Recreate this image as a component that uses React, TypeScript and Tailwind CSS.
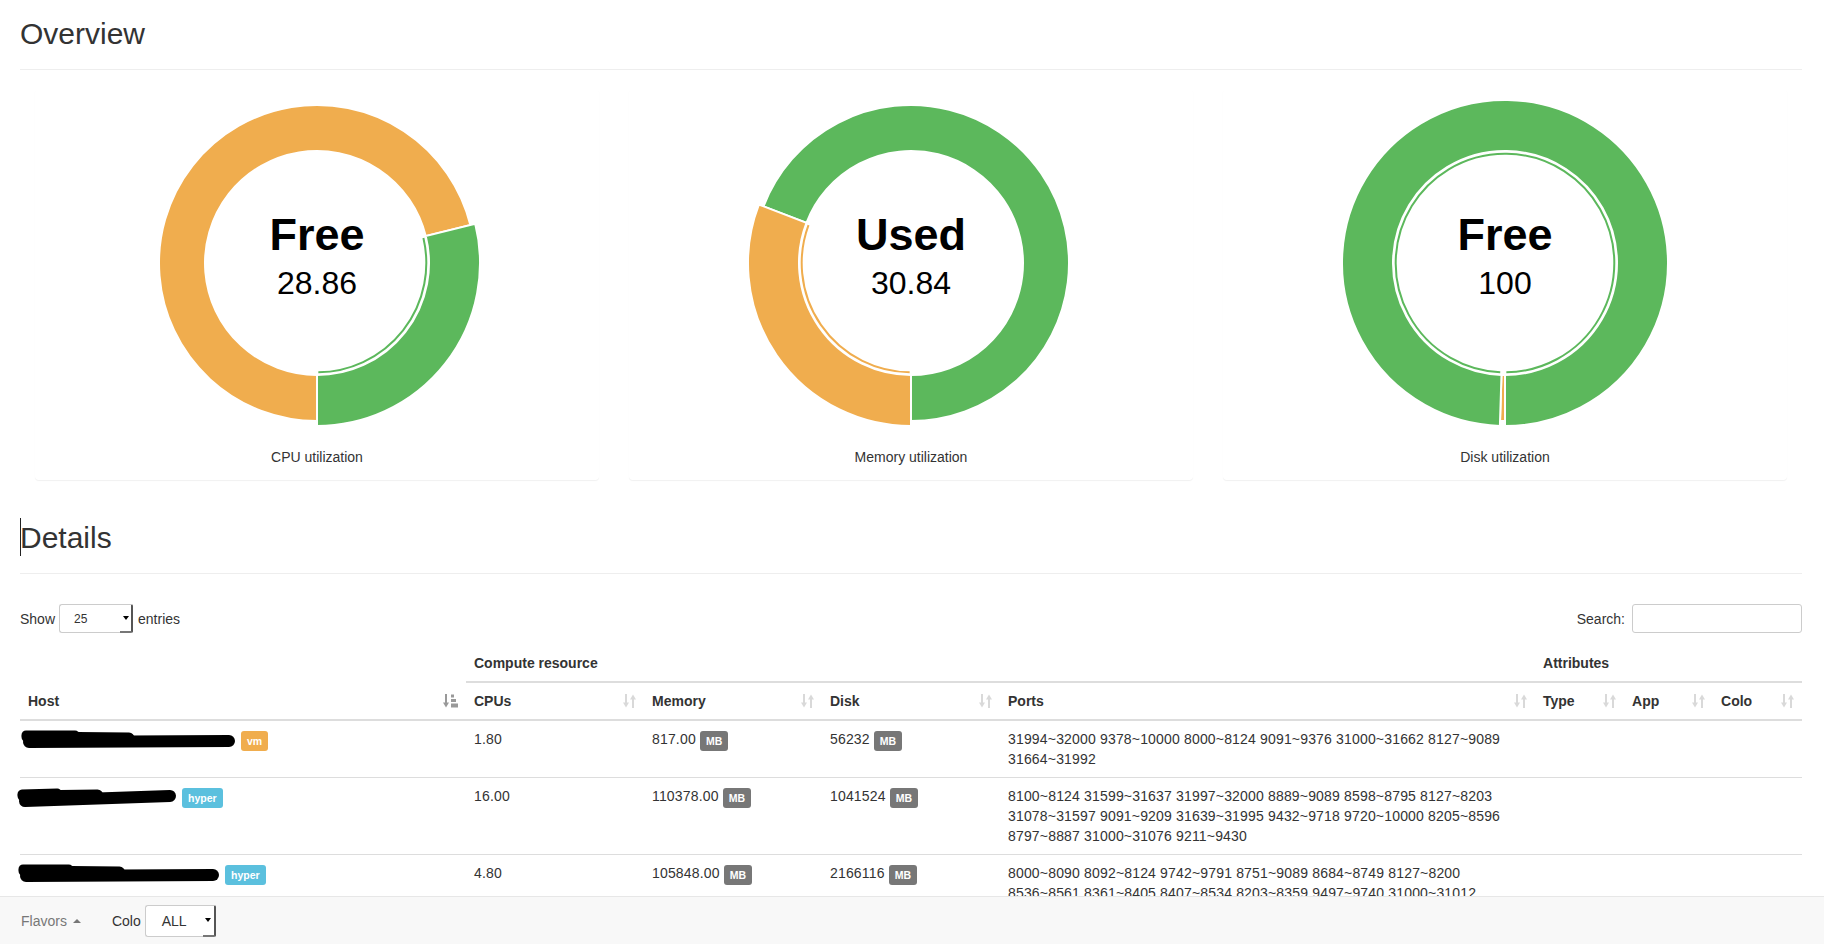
import React from "react";

const GREEN = "#5cb85c";
const ORANGE = "#f0ad4e";

type Seg = { color: string; pct: number; hl?: boolean };

function pt(cx: number, cy: number, r: number, deg: number): [number, number] {
  const a = (deg * Math.PI) / 180;
  return [cx + r * Math.sin(a), cy - r * Math.cos(a)];
}

function ring(cx: number, cy: number, r0: number, r1: number, a0: number, a1: number) {
  const large = a1 - a0 > 180 ? 1 : 0;
  const p0 = pt(cx, cy, r1, a0);
  const p1 = pt(cx, cy, r1, a1);
  const p2 = pt(cx, cy, r0, a1);
  const p3 = pt(cx, cy, r0, a0);
  return `M${p0[0]} ${p0[1]} A${r1} ${r1} 0 ${large} 1 ${p1[0]} ${p1[1]} L${p2[0]} ${p2[1]} A${r0} ${r0} 0 ${large} 0 ${p3[0]} ${p3[1]}Z`;
}

function arc(cx: number, cy: number, r: number, a0: number, a1: number) {
  const large = a1 - a0 > 180 ? 1 : 0;
  const p0 = pt(cx, cy, r, a0);
  const p1 = pt(cx, cy, r, a1);
  return `M${p0[0]} ${p0[1]} A${r} ${r} 0 ${large} 1 ${p1[0]} ${p1[1]}`;
}

function Donut({ segs, title, value, label }: { segs: Seg[]; title: string; value: string; label: string }) {
  const W = 564;
  const H = 348;
  const cx = 282;
  const cy = 174;
  let start = 180;
  const items = segs.map((s) => {
    const a0 = start;
    const a1 = start + s.pct * 3.6;
    start = a1;
    return { ...s, a0, a1 };
  });
  const normal = items.filter((i) => !i.hl);
  const hl = items.filter((i) => i.hl);
  return (
    <div className="mx-[15px] rounded-[4px] bg-white pb-[13px] shadow-[0_1px_1px_rgba(0,0,0,0.06)]">
      <svg width={W} height={H} className="block">
        {normal.map((s, i) => (
          <path key={i} d={ring(cx, cy, 112, 158, s.a0, s.a1)} fill={s.color} stroke="#fff" strokeWidth={2} />
        ))}
        {hl.map((s, i) => (
          <g key={i}>
            <path d={ring(cx, cy, 112, 163, s.a0, s.a1)} fill={s.color} stroke="#fff" strokeWidth={2} />
            <path d={arc(cx, cy, 109.3, s.a0 + 0.7, s.a1 - 0.7)} fill="none" stroke={s.color} strokeWidth={2} />
          </g>
        ))}
        <text
          x={cx}
          y={cy - 13}
          textAnchor="middle"
          fontFamily="'Liberation Sans', Arial, sans-serif"
          fontWeight="bold"
          fontSize={45}
          fill="#000"
        >
          {title}
        </text>
        <text
          x={cx}
          y={cy + 31}
          textAnchor="middle"
          fontFamily="'Liberation Sans', Arial, sans-serif"
          fontSize={32}
          fill="#000"
        >
          {value}
        </text>
      </svg>
      <div className="mt-[10px] text-center text-[14px] leading-[20px] text-[#333]">{label}</div>
    </div>
  );
}

function SortBoth() {
  return (
    <svg width={13} height={14} viewBox="0 0 13 14" className="shrink-0 text-[#d9d9d9]" fill="currentColor">
      <rect x={2} y={0} width={2} height={9} />
      <path d="M0 8.5H6L3 13.5Z" />
      <rect x={9} y={5} width={2} height={9} />
      <path d="M7 5.5H13L10 0.5Z" />
    </svg>
  );
}

function SortAttr() {
  return (
    <svg width={15} height={14} viewBox="0 0 15 14" className="shrink-0 text-[#999]" fill="currentColor">
      <rect x={2} y={0} width={2} height={9} />
      <path d="M0 8.5H6L3 13.5Z" />
      <rect x={8} y={0.5} width={3} height={3} />
      <rect x={8} y={5} width={5} height={3} />
      <rect x={8} y={9.5} width={7} height={4} />
    </svg>
  );
}

function Badge({ children, color }: { children: React.ReactNode; color: string }) {
  const bg = color === "gray" ? "bg-[#777]" : color === "warning" ? "bg-[#f0ad4e]" : "bg-[#5bc0de]";
  return (
    <span
      className={`relative top-[1.5px] inline-block h-[20px] rounded-[3px] px-[6px] align-top text-[10.5px] leading-[20px] font-bold tracking-normal text-white ${bg}`}
    >
      {children}
    </span>
  );
}

function Scribble({ w, cls, tilt }: { w: number; cls: string; tilt: number }) {
  return (
    <svg width={w} height={20} className={`inline-block overflow-visible align-top ${cls}`}>
      <g stroke="#000" strokeLinecap="round" fill="none">
        <path d={`M6 ${8 + tilt} L${w * 0.5} ${9}`} strokeWidth={11} />
        <path d={`M8 ${13 + tilt} L${w - 8} ${12 - tilt}`} strokeWidth={12} />
        <path d={`M5 ${6 + tilt} L${w * 0.25} ${6 + tilt * 0.5}`} strokeWidth={9} />
      </g>
    </svg>
  );
}

function SelectBox({ text, w, h, textCls, pl }: { text: string; w: string; h: string; textCls: string; pl: string }) {
  return (
    <div className={`flex ${w} ${h}`}>
      <div className={`flex flex-1 items-center rounded-l-[3px] border border-r-0 border-[#ccc] bg-white ${pl} ${textCls}`}>
        {text}
      </div>
      <div className="flex w-[13px] items-center justify-center rounded-r-[2px] border-t border-r-[2px] border-b-[2px] border-t-[#ccc] border-r-[#555] border-b-[#777] bg-white">
        <span className="h-0 w-0 border-x-[3px] border-t-[4px] border-x-transparent border-t-black" />
      </div>
    </div>
  );
}

const rows = [
  {
    scribble: { w: 216, cls: "-ml-[7px] mr-[4px]", tilt: 0 },
    badge: { text: "vm", color: "warning" },
    cpus: "1.80",
    mem: "817.00",
    disk: "56232",
    ports: "31994~32000 9378~10000 8000~8124 9091~9376 31000~31662 8127~9089 31664~31992",
  },
  {
    scribble: { w: 161, cls: "-ml-[11px] mr-[4px]", tilt: 2 },
    badge: { text: "hyper", color: "info" },
    cpus: "16.00",
    mem: "110378.00",
    disk: "1041524",
    ports:
      "8100~8124 31599~31637 31997~32000 8889~9089 8598~8795 8127~8203 31078~31597 9091~9209 31639~31995 9432~9718 9720~10000 8205~8596 8797~8887 31000~31076 9211~9430",
  },
  {
    scribble: { w: 203, cls: "-ml-[10px] mr-[4px]", tilt: 0 },
    badge: { text: "hyper", color: "info" },
    cpus: "4.80",
    mem: "105848.00",
    disk: "2166116",
    ports:
      "8000~8090 8092~8124 9742~9791 8751~9089 8684~8749 8127~8200 8536~8561 8361~8405 8407~8534 8203~8359 9497~9740 31000~31012 31014~31990",
  },
];

export default function App() {
  const th = "p-[8px] text-left align-bottom font-bold leading-[20px] border-b-2 border-[#ddd]";
  const td = "p-[8px] align-top leading-[20px] tracking-[0.17px] border-t border-[#ddd]";
  return (
    <div className="min-h-screen bg-white pl-[20px] pr-[22px] pb-[80px] font-['Liberation_Sans',Arial,sans-serif] text-[14px] leading-[20px] text-[#333]">
      {/* Overview header */}
      <div className="border-b border-[#eee] pt-[17px] pb-[9px]">
        <h2 className="mb-[10px] text-[30px] leading-[33px] font-normal">Overview</h2>
      </div>

      {/* Charts */}
      <div className="mt-[19px] grid grid-cols-3">
        <Donut
          segs={[
            { color: ORANGE, pct: 71.14 },
            { color: GREEN, pct: 28.86, hl: true },
          ]}
          title="Free"
          value="28.86"
          label="CPU utilization"
        />
        <Donut
          segs={[
            { color: ORANGE, pct: 30.84, hl: true },
            { color: GREEN, pct: 69.16 },
          ]}
          title="Used"
          value="30.84"
          label="Memory utilization"
        />
        <Donut
          segs={[
            { color: ORANGE, pct: 0.5 },
            { color: GREEN, pct: 99.5, hl: true },
          ]}
          title="Free"
          value="100"
          label="Disk utilization"
        />
      </div>

      {/* Details header */}
      <div className="mt-[41px] border-b border-[#eee] pb-[9px]">
        <h2 className="relative mb-[10px] text-[30px] leading-[33px] font-normal">
          <span className="absolute top-[-3px] left-[0px] h-[38px] w-[1px] bg-[#222]" />
          Details
        </h2>
      </div>

      {/* Controls */}
      <div className="mt-[30px] flex h-[29px] items-center justify-between">
        <div className="flex items-center">
          <span>Show</span>
          <div className="ml-[4px]">
            <SelectBox text="25" w="w-[74px]" h="h-[29px]" textCls="text-[12px]" pl="pl-[14px]" />
          </div>
          <span className="ml-[5px]">entries</span>
        </div>
        <div className="flex items-center">
          <span>Search:</span>
          <input className="ml-[7px] h-[29px] w-[170px] rounded-[3px] border border-[#ccc] bg-white outline-none" />
        </div>
      </div>

      {/* Table */}
      <table className="mt-[12px] w-full table-fixed">
        <colgroup>
          <col className="w-[446px]" />
          <col className="w-[178px]" />
          <col className="w-[178px]" />
          <col className="w-[178px]" />
          <col className="w-[535px]" />
          <col className="w-[89px]" />
          <col className="w-[89px]" />
          <col className="w-[89px]" />
        </colgroup>
        <thead>
          <tr>
            <th rowSpan={2} className={th}>
              <div className="flex items-center justify-between">
                <span>Host</span>
                <SortAttr />
              </div>
            </th>
            <th colSpan={4} className={th}>
              Compute resource
            </th>
            <th colSpan={3} className={th}>
              Attributes
            </th>
          </tr>
          <tr>
            {["CPUs", "Memory", "Disk", "Ports", "Type", "App", "Colo"].map((h) => (
              <th key={h} className={th}>
                <div className="flex items-center justify-between">
                  <span>{h}</span>
                  <SortBoth />
                </div>
              </th>
            ))}
          </tr>
        </thead>
        <tbody>
          {rows.map((r, i) => (
            <tr key={i}>
              <td className={td}>
                <div className="whitespace-nowrap">
                  <Scribble w={r.scribble.w} cls={r.scribble.cls} tilt={r.scribble.tilt} />
                  <Badge color={r.badge.color}>{r.badge.text}</Badge>
                </div>
              </td>
              <td className={td}>{r.cpus}</td>
              <td className={td}>
                {r.mem} <Badge color="gray">MB</Badge>
              </td>
              <td className={td}>
                {r.disk} <Badge color="gray">MB</Badge>
              </td>
              <td className={td}>{r.ports}</td>
              <td className={td}></td>
              <td className={td}></td>
              <td className={td}></td>
            </tr>
          ))}
        </tbody>
      </table>

      {/* Bottom navbar */}
      <div className="fixed right-0 bottom-0 left-0 flex h-[48px] items-center border-t border-[#e7e7e7] bg-[#f8f8f8] pl-[21px]">
        <span className="text-[#777]">Flavors</span>
        <span className="ml-[6px] h-0 w-0 border-x-[4px] border-b-[4px] border-x-transparent border-b-[#777]" />
        <span className="ml-[31px] text-[#333]">Colo</span>
        <div className="ml-[4px]">
          <SelectBox text="ALL" w="w-[71px]" h="h-[32px]" textCls="text-[14px]" pl="pl-[16px]" />
        </div>
      </div>
    </div>
  );
}
